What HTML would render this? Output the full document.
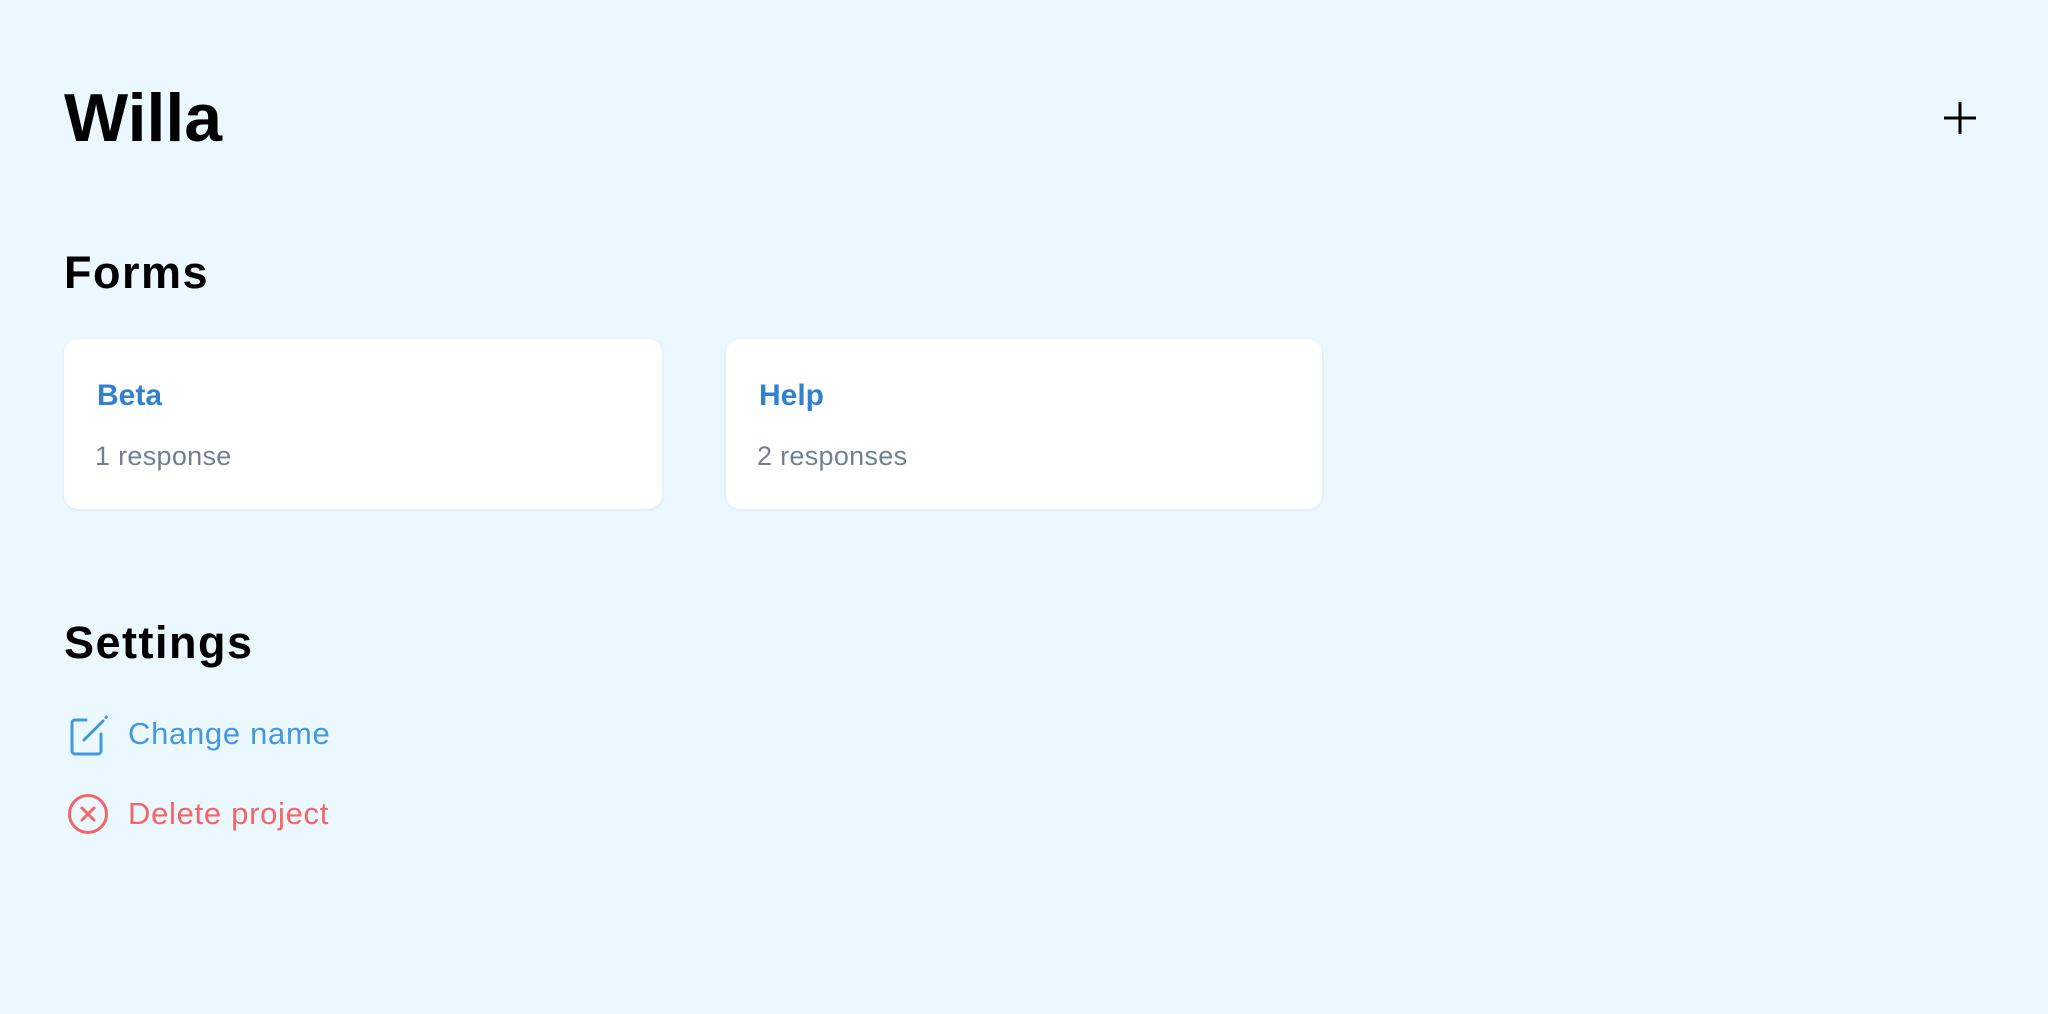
<!DOCTYPE html>
<html><head><meta charset="utf-8"><style>
html,body{margin:0;padding:0;width:2048px;height:1014px;background:#ebf8ff;font-family:"Liberation Sans",sans-serif;overflow:hidden;position:relative}
.a{position:absolute;white-space:nowrap;line-height:1}
.card{position:absolute;top:339px;height:170px;background:#fff;border-radius:14px;box-shadow:0 1px 3px rgba(0,0,0,0.08)}
</style></head><body>
<div class="a" style="left:64px;top:84px;font-size:68px;font-weight:bold;color:#000">Willa</div>
<svg class="a" style="left:1942px;top:100px" width="36" height="36" viewBox="0 0 36 36"><path d="M18 2V34M2 18H34" stroke="#000" stroke-width="3"/></svg>
<div class="a" style="left:64px;top:250px;font-size:45px;font-weight:bold;color:#000;letter-spacing:1.5px">Forms</div>
<div class="card" style="left:64px;width:598px">
 <div class="a" style="left:33px;top:42px;font-size:30px;font-weight:bold;color:#3182ce">Beta</div>
 <div class="a" style="left:31px;top:104px;font-size:27px;color:#718096;letter-spacing:0.3px">1 response</div>
</div>
<div class="card" style="left:726px;width:596px">
 <div class="a" style="left:33px;top:42px;font-size:30px;font-weight:bold;color:#3182ce">Help</div>
 <div class="a" style="left:31px;top:104px;font-size:27px;color:#718096;letter-spacing:0.3px">2 responses</div>
</div>
<div class="a" style="left:64px;top:620px;font-size:45px;font-weight:bold;color:#000;letter-spacing:1.5px">Settings</div>
<svg class="a" style="left:66px;top:712px" width="44" height="44" viewBox="0 0 44 44" fill="none" stroke="#4299e1" stroke-width="3" stroke-linecap="round"><path d="M20 8H9a3 3 0 0 0-3 3v28a3 3 0 0 0 3 3h23a3 3 0 0 0 3-3V22"/><path d="M18 28L37 9"/><path d="M40 5.5L40.5 5"/></svg>
<div class="a" style="left:128px;top:718px;font-size:31px;color:#4299e1;letter-spacing:0.7px">Change name</div>
<svg class="a" style="left:66px;top:793px" width="44" height="44" viewBox="0 0 44 44" fill="none" stroke="#f56565" stroke-width="3" stroke-linecap="round"><circle cx="22" cy="21" r="18.5"/><path d="M16 15L28 27M28 15L16 27"/></svg>
<div class="a" style="left:128px;top:798px;font-size:31px;color:#f56565;letter-spacing:0.7px">Delete project</div>
</body></html>
